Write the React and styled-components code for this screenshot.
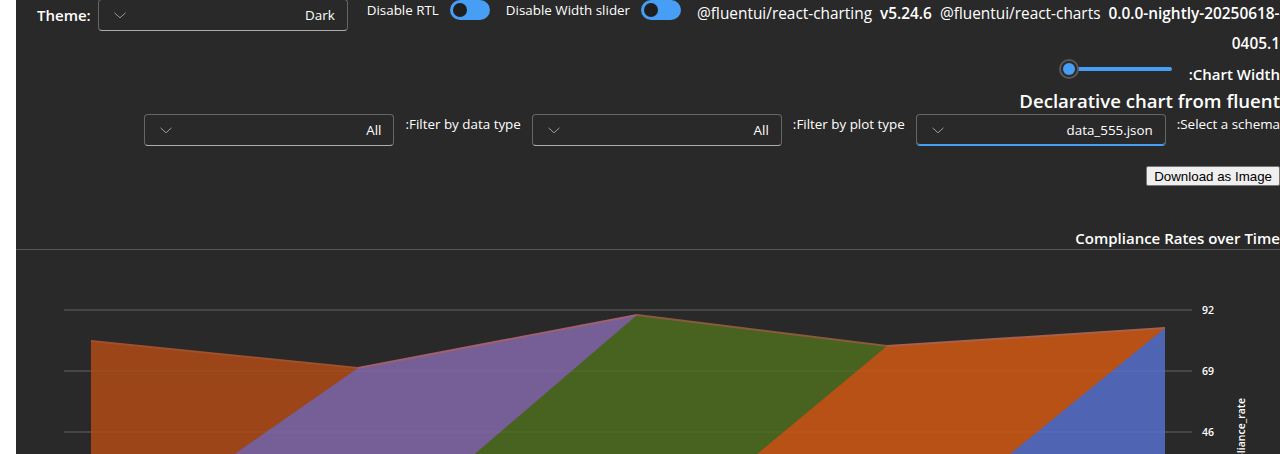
import React from "react";
import styled, { createGlobalStyle } from "styled-components";

const GlobalStyle = createGlobalStyle`
    html, body {
        margin: 0;
        background: #ffffff;
        overflow: hidden;
        font-family: "Open Sans", "Noto Sans", sans-serif;
    }
`;

const Panel = styled.div`
    margin-left: 16px;
    width: 1264px;
    min-height: 454px;
    background-color: #292929;
    color: #ffffff;
    font-size: 13.4px;
    overflow: hidden;
`;

// 상단 바 (LTR)
const TopBar = styled.div`
    display: flex;
    align-items: flex-start;
    gap: 16px;
    padding-left: 21px;
    margin-top: -1px;
`;

const ThemeGroup = styled.div`
    display: flex;
    align-items: center;
    gap: 7px;
    margin-right: 3px;
`;

const BoldLabel = styled.span`
    font-size: 15px;
    font-weight: 600;
    line-height: 20px;
    white-space: nowrap;
`;

const SwitchGroup = styled.label`
    display: flex;
    align-items: center;
    gap: 11px;
    height: 20px;
    margin-top: 1px;
    white-space: nowrap;
    line-height: 20px;
`;

const SwitchTrack = styled.span`
    position: relative;
    display: inline-block;
    width: 40px;
    height: 20px;
    border-radius: 10px;
    background-color: #479ef5;
`;

const SwitchKnob = styled.span`
    position: absolute;
    left: 3px;
    top: 3px;
    width: 14px;
    height: 14px;
    border-radius: 50%;
    background-color: #1f1f1f;
`;

const Versions = styled.div`
    flex: 1;
    min-width: 0;
    font-size: 15.4px;
    line-height: 30px;
`;

const VersionLine = styled.div`
    display: flex;
    gap: 8px;
    white-space: nowrap;
`;

const VersionTail = styled.div`
    text-align: right;
    font-weight: 600;
`;

const Strong = styled.span`
    font-weight: 600;
`;

// 드롭다운
const DropdownBox = styled.div`
    direction: ltr;
    box-sizing: border-box;
    display: flex;
    align-items: center;
    justify-content: space-between;
    width: 250px;
    height: 32px;
    padding: 0 12px 0 15px;
    border: 1px solid #666666;
    border-bottom-color: ${(props) => (props.$focused ? "#479ef5" : "#adadad")};
    box-shadow: ${(props) => (props.$focused ? "inset 0 -1px 0 #479ef5" : "none")};
    border-radius: 4px;
    background-color: #292929;
    font-size: 13.4px;
    color: #ffffff;
    flex-shrink: 0;
`;

const Chevron = () => (
    <svg width="12" height="7" viewBox="0 0 12 7">
        <path d="M0.5 0.8 L6 5.8 L11.5 0.8" fill="none" stroke="#9a9a9a" strokeWidth="1" />
    </svg>
);

const Dropdown = ({ value, focused }) => (
    <DropdownBox $focused={focused}>
        <Chevron />
        <span>{value}</span>
    </DropdownBox>
);

// RTL 영역
const RtlSection = styled.div`
    direction: rtl;
`;

const SliderRow = styled.div`
    display: flex;
    align-items: flex-start;
    gap: 7px;
    height: 21px;
`;

const SliderLabel = styled(BoldLabel)`
    margin-top: 5px;
`;

const SliderBox = styled.div`
    position: relative;
    width: 123px;
    height: 20px;
`;

const SliderRail = styled.div`
    position: absolute;
    left: 10px;
    right: 10px;
    top: 8px;
    height: 4px;
    border-radius: 2px;
    background-color: #479ef5;
`;

const SliderThumb = styled.div`
    position: absolute;
    left: 0;
    top: 0;
    box-sizing: border-box;
    width: 20px;
    height: 20px;
    border-radius: 50%;
    border: 2px solid #575757;
    background-color: #292929;
    display: flex;
    align-items: center;
    justify-content: center;

    &::before {
        content: "";
        width: 12px;
        height: 12px;
        border-radius: 50%;
        background-color: #479ef5;
    }
`;

const Heading = styled.div`
    margin-top: 8px;
    font-size: 18.6px;
    font-weight: 600;
    line-height: 26px;
    white-space: nowrap;
`;

const FilterRow = styled.div`
    display: flex;
    align-items: flex-start;
    gap: 11px;
`;

const FilterLabel = styled.span`
    line-height: 20px;
    white-space: nowrap;
`;

const ButtonRow = styled.div`
    display: flex;
    margin-top: 20px;
`;

const DownloadButton = styled.button`
    font-family: "Liberation Sans", Arial, sans-serif;
    font-size: 13.33px;
    padding: 1px 7px;
    height: 20px;
    background-color: #efefef;
    color: #000000;
    border: 1px solid #767676;
    border-radius: 2px;
`;

const ChartTitle = styled.div`
    margin-top: 41px;
    font-size: 15px;
    font-weight: 600;
    line-height: 22px;
    white-space: nowrap;
`;

const Divider = styled.div`
    height: 1px;
    margin-left: -16px;
    width: 1280px;
    background-color: #575757;
`;

const ChartSvg = styled.svg`
    display: block;
`;

const gridLines = [
    { y: 60, label: "92" },
    { y: 121, label: "69" },
    { y: 182, label: "46" },
];

const areas = [
    { color: "#9b4519", stroke: "#a0502c", points: [[75, 304], [75, 91], [342, 118], [342, 304]], top: [[75, 91], [342, 118]] },
    { color: "#765e96", stroke: "#a0606e", points: [[75, 304], [342, 118], [621, 65], [621, 304]], top: [[342, 118], [621, 65]] },
    { color: "#48631f", stroke: "#8a5a3c", points: [[342, 304], [621, 65], [871, 96], [871, 304]], top: [[621, 65], [871, 96]] },
    { color: "#b85115", stroke: "#a8604a", points: [[621, 304], [871, 96], [1149, 78], [1149, 304]], top: [[871, 96], [1149, 78]] },
    { color: "#5064b4", stroke: "#5a6cbc", points: [[871, 304], [1149, 78], [1149, 304]], top: [] },
];

const AreaChart = () => (
    <ChartSvg width="1264" height="205" viewBox="0 0 1264 205">
        {gridLines.map((g) => (
            <line key={g.label} x1="48" x2="1176" y1={g.y} y2={g.y} stroke="#5a5a5a" strokeWidth="1" />
        ))}
        {areas.map((a, i) => (
            <g key={i}>
                <polygon points={a.points.map((p) => p.join(",")).join(" ")} fill={a.color} />
                {a.top.length > 0 && (
                    <polyline points={a.top.map((p) => p.join(",")).join(" ")} fill="none" stroke={a.stroke} strokeWidth="2" />
                )}
            </g>
        ))}
        {gridLines.map((g) => (
            <line key={`o${g.label}`} x1="48" x2="1176" y1={g.y} y2={g.y} stroke="#ffffff" strokeOpacity="0.06" strokeWidth="1" />
        ))}
        {gridLines.map((g) => (
            <text key={g.label} x="1186" y={g.y + 4} fill="#ffffff" fontSize="10.5" fontWeight="600" fontFamily="Open Sans, sans-serif">
                {g.label}
            </text>
        ))}
        <text
            transform="translate(1229, 148) rotate(-90)"
            textAnchor="end"
            fill="#ffffff"
            fontSize="10.5"
            fontWeight="600"
            fontFamily="Open Sans, sans-serif"
        >
            compliance_rate
        </text>
    </ChartSvg>
);

export default function App() {
    return (
        <>
            <GlobalStyle />
            <Panel>
                <TopBar>
                    <ThemeGroup>
                        <BoldLabel>Theme:</BoldLabel>
                        <Dropdown value="Dark" />
                    </ThemeGroup>
                    <SwitchGroup>
                        Disable RTL
                        <SwitchTrack><SwitchKnob /></SwitchTrack>
                    </SwitchGroup>
                    <SwitchGroup>
                        Disable Width slider
                        <SwitchTrack><SwitchKnob /></SwitchTrack>
                    </SwitchGroup>
                    <Versions>
                        <VersionLine>
                            <span>@fluentui/react-charting</span>
                            <Strong>v5.24.6</Strong>
                            <span>@fluentui/react-charts</span>
                            <Strong>0.0.0-nightly-20250618-</Strong>
                        </VersionLine>
                        <VersionTail>0405.1</VersionTail>
                    </Versions>
                </TopBar>
                <RtlSection>
                    <SliderRow>
                        <SliderLabel>Chart Width:</SliderLabel>
                        <SliderBox>
                            <SliderRail />
                            <SliderThumb />
                        </SliderBox>
                    </SliderRow>
                    <Heading>Declarative chart from fluent</Heading>
                    <FilterRow>
                        <FilterLabel>Select a schema:</FilterLabel>
                        <Dropdown value="data_555.json" focused />
                        <FilterLabel>Filter by plot type:</FilterLabel>
                        <Dropdown value="All" />
                        <FilterLabel>Filter by data type:</FilterLabel>
                        <Dropdown value="All" />
                    </FilterRow>
                    <ButtonRow>
                        <DownloadButton>Download as Image</DownloadButton>
                    </ButtonRow>
                    <ChartTitle>Compliance Rates over Time</ChartTitle>
                </RtlSection>
                <Divider />
                <AreaChart />
            </Panel>
        </>
    );
}
